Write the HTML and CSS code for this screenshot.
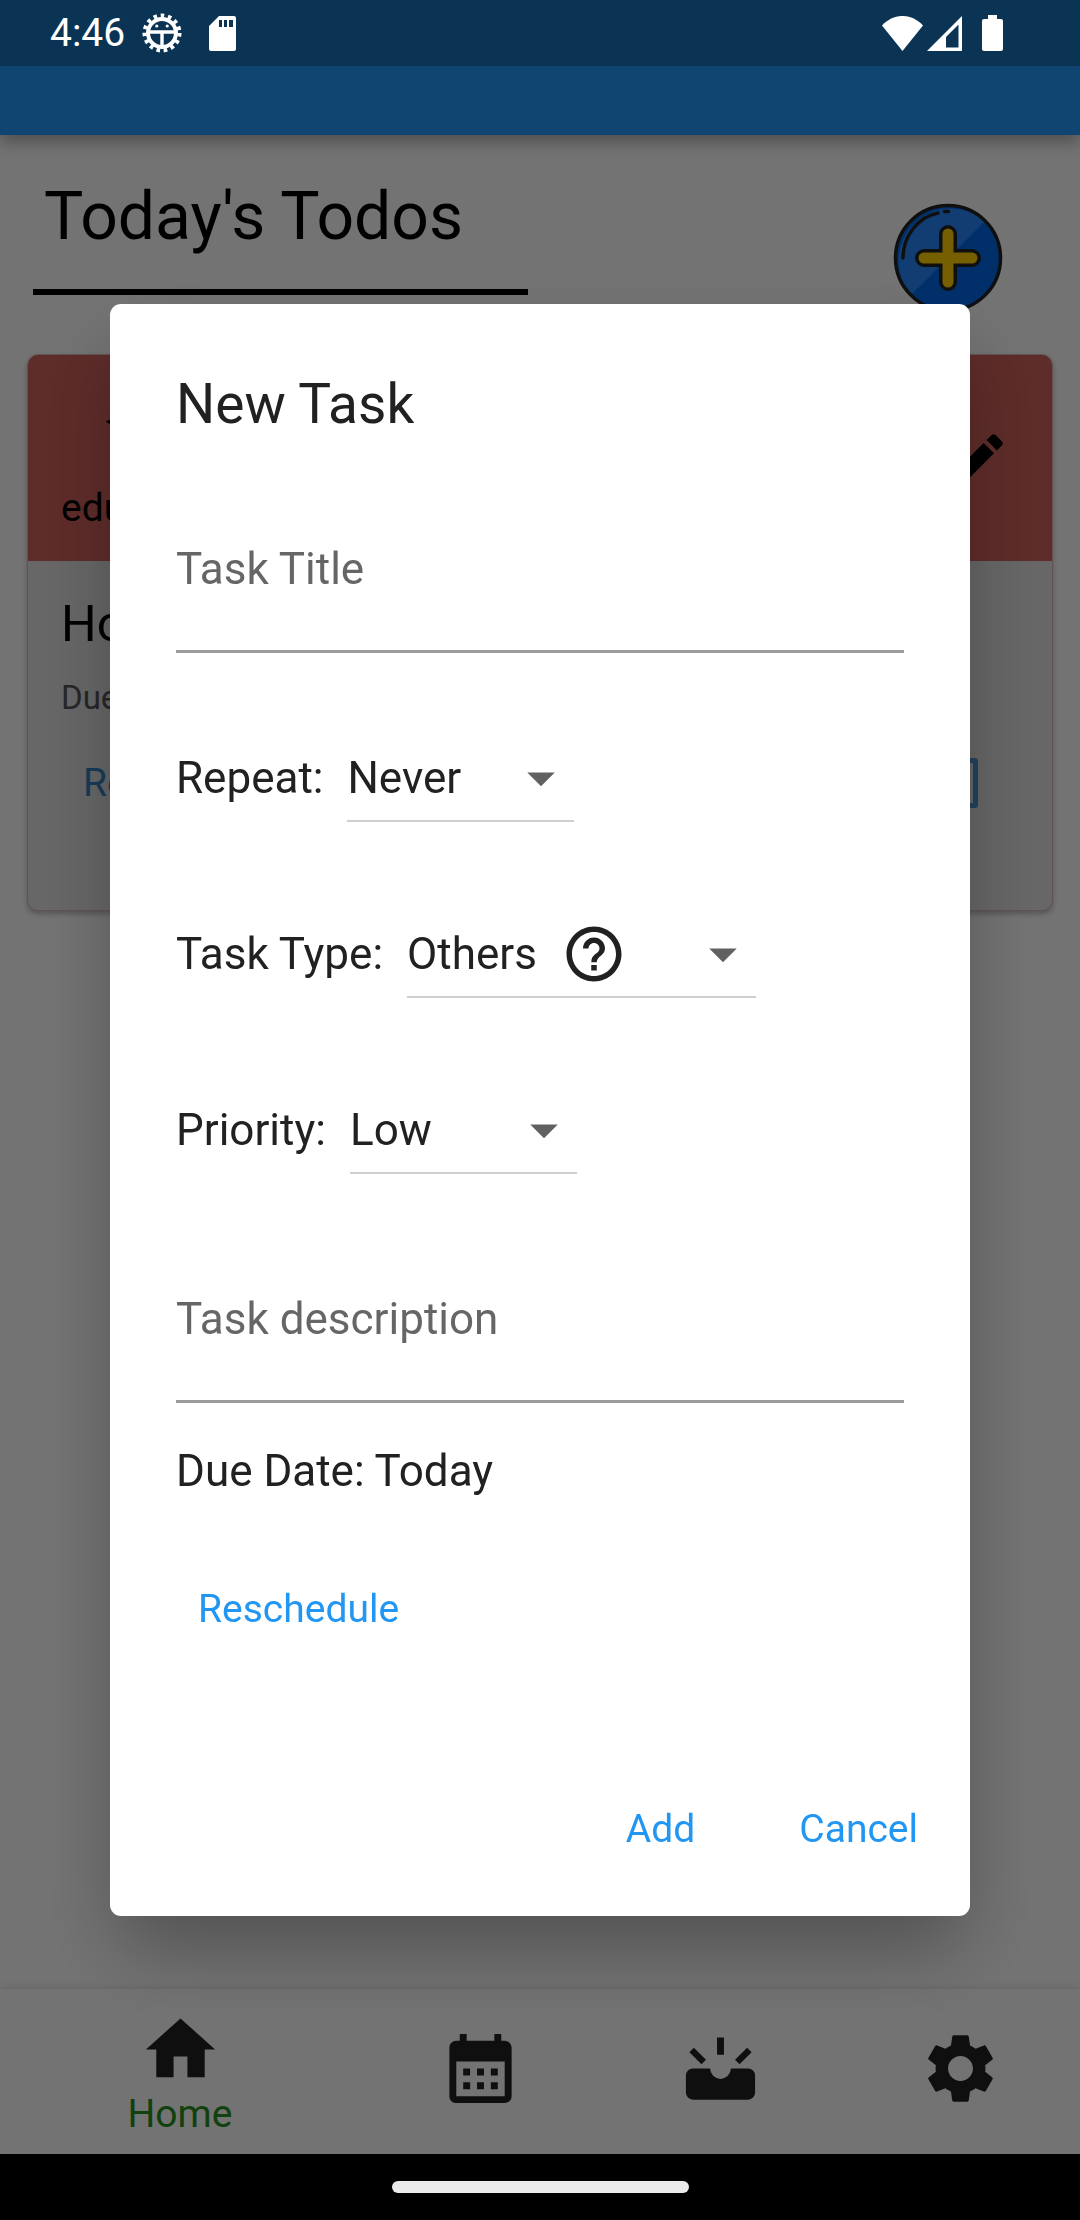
FILE: index.html
```html
<!DOCTYPE html>
<html lang="en">
<head>
<meta charset="utf-8">
<meta name="viewport" content="width=device-width, initial-scale=1">
<title>Today's Todos</title>
<link rel="stylesheet" href="styles.css">
</head>
<body>
<div class="app">
  <header class="status-bar">
    <span class="clock">4:46</span>
    <svg class="status-debug" viewBox="0 0 40 40" aria-hidden="true">
      <circle cx="20" cy="20" r="14" fill="none" stroke="#fff" stroke-width="4"/>
      <circle cx="20" cy="20" r="17.500" fill="none" stroke="#fff" stroke-width="4" stroke-dasharray="3.600 3.730"/>
      <path d="M5 19h30M20 19v16" stroke="#fff" stroke-width="3.400" fill="none"/>
      <circle cx="14.800" cy="13" r="1.600" fill="#fff"/><circle cx="25.200" cy="13" r="1.600" fill="#fff"/>
    </svg>
    <svg class="status-card" viewBox="0 0 27 35" aria-hidden="true">
      <path fill="#fff" fill-rule="evenodd" d="M10 0h15a2 2 0 0 1 2 2v31a2 2 0 0 1-2 2H2a2 2 0 0 1-2-2V10zM10 4v7h3V4zM15 4v7h3V4zM20 4v7h4V4z"/>
    </svg>
    <span class="status-spacer"></span>
    <svg class="status-wifi" viewBox="0 0 41 35" aria-hidden="true"><path fill="#fff" d="M20.500 35 0 9.500C12-3.200 29-3.200 41 9.500z"/></svg>
    <svg class="status-signal" viewBox="0 0 35 35" aria-hidden="true"><path fill="#fff" fill-rule="evenodd" d="M35 0v35H0zM31.500 8.500 19 21v10.500h12.500z"/></svg>
    <svg class="status-battery" viewBox="0 0 21 36" aria-hidden="true"><path fill="#fff" d="M6 0h9v4h4a2 2 0 0 1 2 2v28a2 2 0 0 1-2 2H2a2 2 0 0 1-2-2V6a2 2 0 0 1 2-2h4z"/></svg>
  </header>
  <div class="app-bar"></div>

  <main class="content">
    <div class="page-head">
      <h1 class="page-title">Today's Todos</h1>
      <button class="add-button" type="button" aria-label="Add a task">
        <svg viewBox="0 0 110 110" aria-hidden="true">
          <circle cx="55" cy="55" r="52.500" fill="#0068e8"/>
          <path fill="#2886f8" d="M18 92A52.500 52.500 0 0 1 92 18z"/>
          <circle cx="55" cy="55" r="52.500" fill="none" stroke="#222" stroke-width="3.500"/>
          <path d="M10 55C10 33 25 14 45 10M51.500 8.500h4" fill="none" stroke="#222" stroke-width="3.500" stroke-linecap="round"/>
          <path d="M55 31v48M31 55h48" fill="none" stroke="#222" stroke-width="18" stroke-linecap="round"/>
          <path d="M55 31v48M31 55h48" fill="none" stroke="#ffd000" stroke-width="11" stroke-linecap="round"/>
        </svg>
      </button>
    </div>

    <article class="card">
      <div class="card-head">
        <div class="category">
          <svg class="icon category-icon" viewBox="0 0 24 24" aria-hidden="true"><path d="M5 13.180v4L12 21l7-3.820v-4L12 17l-7-3.820zM12 3L1 9l11 6 9-4.910V17h2V9L12 3z"/></svg>
          <span>education</span>
        </div>
        <button class="edit-button" type="button" aria-label="Edit task">
          <svg class="icon" viewBox="0 0 24 24" aria-hidden="true"><path d="M3 17.250V21h3.750L17.810 9.940l-3.750-3.750L3 17.250zM20.710 7.040c.39-.39.39-1.020 0-1.410l-2.340-2.340c-.39-.39-1.020-.39-1.410 0l-1.830 1.830 3.750 3.750 1.830-1.830z"/></svg>
        </button>
      </div>
      <div class="card-body">
        <h2 class="card-title">Homework</h2>
        <p class="card-due">Due Date: Today</p>
        <div class="card-actions">
          <button class="text-button card-button" type="button">Reschedule</button>
          <input class="done-box" type="checkbox" aria-label="Done">
        </div>
      </div>
    </article>
  </main>

  <nav class="bottom-nav">
    <a class="nav-item nav-item-current" href="#home" aria-current="page">
      <svg class="nav-icon" viewBox="0 0 24 24" aria-hidden="true"><path d="M10 20v-6h4v6h5v-8h3L12 3 2 12h3v8z"/></svg>
      <span>Home</span>
    </a>
    <a class="nav-item" href="#calendar" aria-label="Calendar">
      <svg class="nav-icon" viewBox="0 0 24 24" aria-hidden="true"><path d="M19 4h-1V2h-2v2H8V2H6v2H5c-1.110 0-1.990.9-1.990 2L3 20c0 1.100.89 2 2 2h14c1.100 0 2-.9 2-2V6c0-1.100-.9-2-2-2zm0 16H5V10h14v10zM9 14H7v-2h2v2zm4 0h-2v-2h2v2zm4 0h-2v-2h2v2zm-8 4H7v-2h2v2zm4 0h-2v-2h2v2zm4 0h-2v-2h2v2z"/></svg>
    </a>
    <a class="nav-item" href="#upcoming" aria-label="Upcoming">
      <svg class="nav-icon" viewBox="0 0 24 24" aria-hidden="true"><path d="M4 12h5a3 3 0 0 0 6 0h5a2 2 0 0 1 2 2v5a2 2 0 0 1-2 2H4a2 2 0 0 1-2-2v-5a2 2 0 0 1 2-2zM11 3h2v5h-2zM3 7.300 4.300 6l3.500 3.500-1.300 1.300zM21 7.300 19.700 6l-3.500 3.500 1.300 1.300z"/></svg>
    </a>
    <a class="nav-item" href="#settings" aria-label="Settings">
      <svg class="nav-icon" viewBox="0 0 24 24" aria-hidden="true"><path d="M19.140 12.940c.04-.3.06-.61.06-.94 0-.32-.02-.64-.07-.94l2.030-1.580c.18-.14.23-.41.12-.61l-1.920-3.320c-.12-.22-.37-.29-.59-.22l-2.390.96c-.5-.38-1.030-.7-1.620-.94l-.36-2.540c-.04-.24-.24-.41-.48-.41h-3.840c-.24 0-.43.17-.47.41l-.36 2.540c-.59.24-1.130.57-1.620.94l-2.390-.96c-.22-.08-.47 0-.59.22L2.740 8.870c-.12.21-.08.47.12.61l2.030 1.580c-.05.3-.09.63-.09.94s.02.64.07.94l-2.030 1.580c-.18.14-.23.41-.12.61l1.920 3.320c.12.22.37.29.59.22l2.390-.96c.5.38 1.030.7 1.620.94l.36 2.540c.05.24.24.41.48.41h3.840c.24 0 .44-.17.47-.41l.36-2.540c.59-.24 1.130-.56 1.620-.94l2.390.96c.22.08.47 0 .59-.22l1.920-3.320c.12-.22.07-.47-.12-.61l-2.010-1.580zM12 15.600c-1.980 0-3.600-1.620-3.600-3.600s1.620-3.600 3.600-3.600 3.600 1.620 3.600 3.600-1.620 3.600-3.600 3.600z"/></svg>
    </a>
  </nav>
  <div class="gesture-bar"><span class="gesture-pill"></span></div>
</div>

<div class="scrim">
  <form class="dialog" role="dialog" aria-modal="true" aria-labelledby="dialog-title">
    <h2 class="dialog-title" id="dialog-title">New Task</h2>
    <input class="text-field" type="text" placeholder="Task Title" aria-label="Task Title">
    <div class="choices">
      <div class="choice">
        <label class="choice-label" for="repeat">Repeat:</label>
        <div class="select-box">
          <select class="select select-short" id="repeat"><option>Never</option></select>
          <span class="select-icons">
            <svg class="icon arrow" viewBox="0 0 24 24" aria-hidden="true"><path d="M7 10l5 5 5-5z"/></svg>
          </span>
        </div>
      </div>
      <div class="choice">
        <label class="choice-label" for="type">Task Type:</label>
        <div class="select-box">
          <select class="select select-long" id="type"><option>Others</option></select>
          <span class="select-icons">
            <svg class="icon help" viewBox="0 0 24 24" aria-hidden="true"><path d="M11 18h2v-2h-2v2zm1-16C6.480 2 2 6.480 2 12s4.480 10 10 10 10-4.480 10-10S17.520 2 12 2zm0 18c-4.410 0-8-3.590-8-8s3.590-8 8-8 8 3.590 8 8-3.590 8-8 8zm0-14c-2.210 0-4 1.790-4 4h2c0-1.100.9-2 2-2s2 .9 2 2c0 2-3 1.750-3 5h2c0-2.250 3-2.500 3-5 0-2.210-1.790-4-4-4z"/></svg>
            <svg class="icon arrow" viewBox="0 0 24 24" aria-hidden="true"><path d="M7 10l5 5 5-5z"/></svg>
          </span>
        </div>
      </div>
      <div class="choice">
        <label class="choice-label" for="priority">Priority:</label>
        <div class="select-box">
          <select class="select select-short" id="priority"><option>Low</option></select>
          <span class="select-icons">
            <svg class="icon arrow" viewBox="0 0 24 24" aria-hidden="true"><path d="M7 10l5 5 5-5z"/></svg>
          </span>
        </div>
      </div>
    </div>
    <input class="text-field" type="text" placeholder="Task description" aria-label="Task description">
    <p class="due">Due Date: Today</p>
    <button class="text-button" type="button">Reschedule</button>
    <div class="dialog-actions">
      <button class="text-button" type="button">Add</button>
      <button class="text-button" type="button">Cancel</button>
    </div>
  </form>
</div>
</body>
</html>
```

FILE: styles.css
```css
* {
  box-sizing: border-box;
}

body {
  margin: 0;
  background: #fafafa;
  color: #000;
  font-family: Roboto, "Liberation Sans", sans-serif;
  font-size: 44px;
}

h1, h2, p {
  margin: 0;
  font-weight: 400;
}

button, input, select {
  margin: 0;
  padding: 0;
  border: 0;
  background: none;
  color: inherit;
  font: inherit;
}

svg {
  display: block;
  flex: none;
}

.icon {
  width: 66px;
  height: 66px;
  fill: currentColor;
}

.app {
  display: flex;
  flex-direction: column;
  min-height: 100vh;
}

/* System status bar: stays above the scrim */
.status-bar {
  position: sticky;
  top: 0;
  z-index: 3;
  display: flex;
  align-items: center;
  height: 66px;
  padding: 0 77px 0 50px;
  background: #0b3454;
  color: #fff;
  font-size: 39px;
  line-height: 46px;
}

.status-debug {
  width: 40px;
  height: 40px;
  margin-left: 17px;
}

.status-card {
  width: 27px;
  height: 35px;
  margin-left: 27px;
}

.status-spacer {
  flex: 1;
}

.status-wifi {
  width: 41px;
  height: 35px;
}

.status-signal {
  width: 35px;
  height: 35px;
  margin-left: 4px;
}

.status-battery {
  width: 21px;
  height: 36px;
  margin-left: 20px;
}

.app-bar {
  height: 69px;
  background: #2196f3;
  box-shadow: 0 6px 16px rgba(0, 0, 0, 0.35);
}

.content {
  flex: 1;
}

.page-head {
  display: flex;
  justify-content: space-between;
  padding: 43px 77px 0 33px;
  margin-bottom: 41px;
}

.page-title {
  align-self: flex-start;
  width: 495px;
  padding: 0 11px 33px;
  border-bottom: 6px solid #000;
  font-size: 66px;
  line-height: 78px;
}

.add-button {
  width: 110px;
  height: 110px;
  margin-top: 25px;
}

.card {
  margin: 0 27px;
  border: 1px solid #d6b4b2;
  border-radius: 11px;
  background: #e0e0e0;
  box-shadow: 0 3px 5px rgba(0, 0, 0, 0.25);
}

.card-head {
  display: flex;
  justify-content: space-between;
  align-items: flex-start;
  padding: 42px 41px 30px 33px;
  border-radius: 10px 10px 0 0;
  background: #cd615b;
}

.category {
  display: flex;
  flex-direction: column;
  gap: 22px;
  font-size: 39px;
  line-height: 46px;
}

.category-icon {
  margin-left: 42px;
}

.edit-button {
  padding: 29px 0;
}

.card-body {
  padding: 34px 74px 61px 33px;
}

.card-title {
  margin-bottom: 26px;
  font-size: 50px;
  line-height: 58px;
}

.card-due {
  color: #555;
  font-size: 33px;
  line-height: 38px;
}

.card-actions {
  display: flex;
  align-items: center;
  justify-content: space-between;
}

.done-box {
  appearance: none;
  width: 50px;
  height: 50px;
  border: 5px solid #4a90cc;
  border-radius: 3px;
}

.text-button {
  height: 132px;
  padding: 0 22px;
  color: #2196f3;
  font-size: 39px;
  line-height: 46px;
}

.card-button {
  color: #3580bf;
}

.bottom-nav {
  display: grid;
  grid-template-columns: 3fr 2fr 2fr 2fr;
  height: 165px;
  background: #fafafa;
  box-shadow: 0 -2px 6px rgba(0, 0, 0, 0.1);
}

.nav-item {
  display: flex;
  flex-direction: column;
  align-items: center;
  padding-top: 38px;
  color: #278f22;
  font-size: 39px;
  line-height: 46px;
  text-decoration: none;
}

.nav-item-current {
  padding-top: 19px;
}

.nav-icon {
  width: 83px;
  height: 83px;
  fill: #222;
}

.gesture-bar {
  position: sticky;
  bottom: 0;
  z-index: 3;
  display: flex;
  align-items: center;
  justify-content: center;
  height: 66px;
  background: #000;
}

.gesture-pill {
  width: 297px;
  height: 12px;
  border-radius: 6px;
  background: #ebebeb;
}

/* Modal dialog */
.scrim {
  position: fixed;
  inset: 0;
  z-index: 2;
  display: grid;
  align-items: center;
  padding: 0 110px;
  background: rgba(0, 0, 0, 0.54);
}

.dialog {
  display: flex;
  flex-direction: column;
  align-items: flex-start;
  padding: 66px 66px 21px;
  border-radius: 11px;
  background: #fff;
  box-shadow: 0 40px 80px -8px rgba(0, 0, 0, 0.3);
  color: #212121;
  line-height: 52px;
}

.dialog-title {
  margin-bottom: 50px;
  font-size: 55px;
  line-height: 68px;
}

.text-field {
  width: 100%;
  height: 165px;
  border-bottom: 3px solid #9b9b9b;
  border-radius: 0;
}

.text-field::placeholder {
  color: #666;
  opacity: 1;
}

.choices {
  display: flex;
  flex-direction: column;
  gap: 90px;
  margin: 83px 0 64px;
}

.choice {
  display: flex;
  align-items: center;
  gap: 24px;
}

.choice-label {
  padding-bottom: 2px;
}

.select-box {
  display: grid;
}

.select {
  grid-area: 1 / 1;
  appearance: none;
  height: 86px;
  padding-right: 66px;
  border-bottom: 2px solid #cfcfcf;
  border-radius: 0;
}

.select-short {
  width: 227px;
}

.select-long {
  width: 349px;
}

.select-icons {
  grid-area: 1 / 1;
  display: flex;
  align-items: center;
  justify-content: flex-end;
  gap: 63px;
  padding-bottom: 2px;
  pointer-events: none;
}

.arrow {
  fill: #616161;
}

.due {
  margin: 42px 0 46px;
}

.dialog-actions {
  display: flex;
  align-self: flex-end;
  gap: 60px;
  margin: 88px -36px 0 0;
}
```
